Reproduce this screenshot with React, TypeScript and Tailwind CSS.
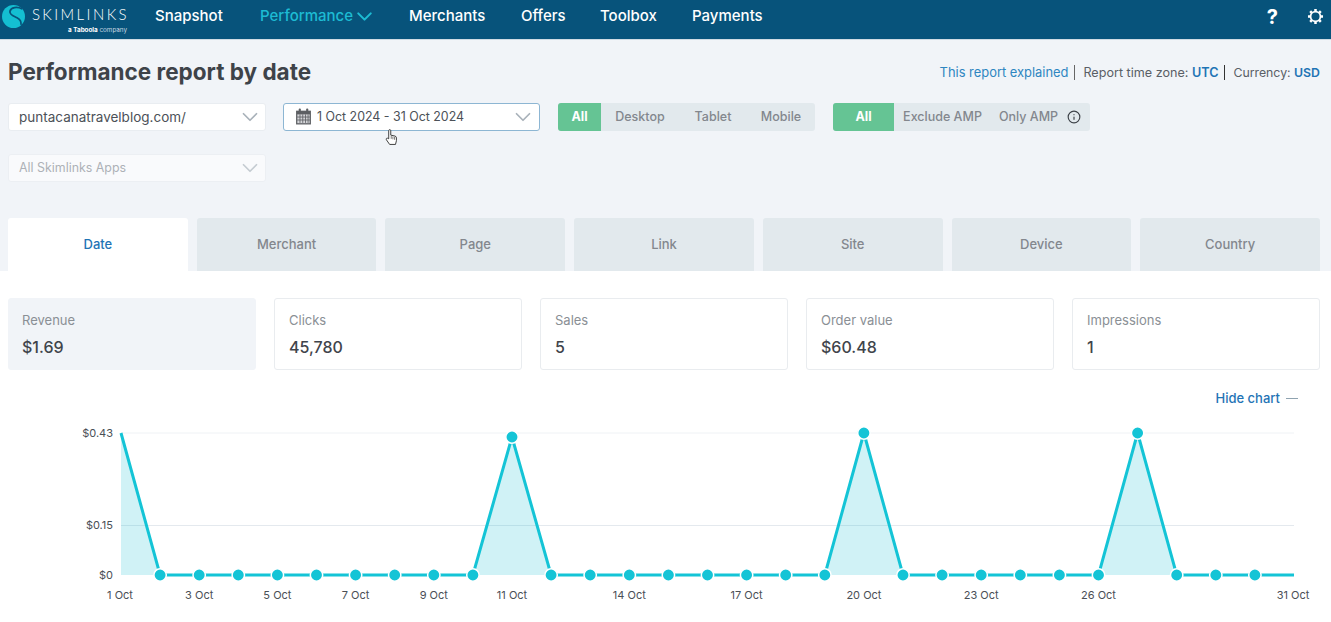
import React from "react";
import { ChevronDown, Info } from "lucide-react";

const F = "font-['Inter','Liberation_Sans',sans-serif]";
const xs = (d: number) => 121 + (d - 1) * 39.1;
const ys: Record<number, number> = { 1: 433, 11: 437, 20: 433, 27: 433 };
const y = (d: number) => ys[d] ?? 575;
const days = Array.from({ length: 31 }, (_, i) => i + 1);
const line = days.map((d) => `${xs(d)},${y(d)}`).join(" ");
const labels = [1, 3, 5, 7, 9, 11, 14, 17, 20, 23, 26, 31];

function Gear() {
  return (
    <svg viewBox="0 0 24 24" className="w-[19px] h-[19px]" fill="none" stroke="white" strokeWidth="2.200">
      <circle cx="12" cy="12" r="6.200" />
      <path strokeWidth="3.200" d="M12 2.500v3M12 18.500v3M2.500 12h3M18.500 12h3M5.300 5.300l2 2M16.700 16.700l2 2M5.300 18.700l2-2M16.700 7.300l2-2" />
    </svg>
  );
}

function Calendar() {
  return (
    <svg viewBox="0 0 16 16" className="w-[17px] h-[17px] shrink-0" fill="#5d5f63">
      <path d="M1 2.500h14V15.500H1z" />
      <rect x="3.500" y="0.500" width="2" height="3.500" rx="0.800" />
      <rect x="10.500" y="0.500" width="2" height="3.500" rx="0.800" />
      <path d="M2.200 6h11.600v8.300H2.200z" fill="#d5d6d9" />
      <path d="M2 8.500h12M2 11.300h12M4.700 6v8M7.300 6v8M9.900 6v8M12.300 6v8" stroke="#5d5f63" strokeWidth="0.800" />
    </svg>
  );
}

function Select({ text, muted, active, w, icon, size }: { text: string; muted?: boolean; active?: boolean; w: string; icon?: boolean; size: string }) {
  return (
    <div className={`${w} h-7 rounded-[3px] bg-white flex items-center justify-between border ${active ? "border-[#8db6d3] pl-[11px] pr-[3px]" : "border-[#e9edf1] pl-[10px] pr-[2px]"} ${muted ? "opacity-60" : ""}`}>
      <span className="flex items-center gap-[5px]">
        {icon && <Calendar />}
        <span className={`${size} ${muted ? "text-[#80858c]" : "text-[#4c5158]"}`}>{text}</span>
      </span>
      <ChevronDown size={26} strokeWidth={1.6} className="text-[#a9b2ba]" />
    </div>
  );
}

function Seg({ items, first, rest, children }: { items: string[]; first: string; rest: string[]; children?: React.ReactNode }) {
  return (
    <div className="h-[28px] rounded-[3px] bg-[#e2e9ed] flex items-center overflow-hidden text-[12.500px] font-medium text-[#83878d]">
      <div className={`${first} h-full bg-[#65c494] text-white font-bold flex items-center justify-center`}>{items[0]}</div>
      {items.slice(1).map((t, i) => (
        <div key={t} className={`${rest[i]} h-full flex items-center justify-center`}>{t}</div>
      ))}
      {children}
    </div>
  );
}

function Card({ label, value, active }: { label: string; value: string; active?: boolean }) {
  return (
    <div className={`h-[72px] rounded-[3px] flex flex-col justify-center gap-[9px] border ${active ? "bg-[#f1f4f8] border-[#f1f4f8] pl-[13px]" : "bg-white border-[#e9ecef] pl-[14px]"}`}>
      <div className="text-[13px] text-[#8a8f95] leading-4">{label}</div>
      <div className="text-[16px] font-medium text-[#3f444b] leading-5">{value}</div>
    </div>
  );
}

export default function App() {
  return (
    <div className={`${F} w-[1331px] h-[622px] overflow-hidden bg-white relative`}>
      <header className="h-10 bg-[#07537b] border-b border-[#cfdbe3] flex items-center pl-[2px] pr-[6px] pb-[6px] text-white">
        <div className="w-[125px] flex items-start gap-[5px] shrink-0 mt-[6px]">
          <svg viewBox="0 0 26 26" className="w-[23px] h-[23px] shrink-0 mt-[-1px]">
            <circle cx="13" cy="13" r="13" fill="#14bfd2" />
            <path d="M23 4.500C17 1.500 10 2.500 9 7c-.8 4 4 5.500 8 7.500 3.500 1.800 5 4 4.500 8" fill="none" stroke="#07537b" strokeWidth="2" />
          </svg>
          <div className="flex flex-col items-end leading-none w-[98px]">
            <span className="text-[15px] tracking-[0.16em] font-['Lato',sans-serif] font-light mr-[-2px] mt-[1px]">SKIMLINKS</span>
            <span className="text-[6.300px] text-[#c7d8e2] mt-[5px]"><b className="text-white">a Taboola</b> company</span>
          </div>
        </div>
        <nav className="flex items-center ml-[28px] text-[15px] font-medium">
          <span className="w-[105px]">Snapshot</span>
          <span className="w-[149px] text-[#1dbbd3] flex items-center">Performance <ChevronDown size={25} strokeWidth={2} className="ml-[-1px]" /></span>
          <span className="w-[112px]">Merchants</span>
          <span className="w-[79px]">Offers</span>
          <span className="w-[92px]">Toolbox</span>
          <span>Payments</span>
        </nav>
        <div className="ml-auto flex items-center gap-[28px]">
          <span className="text-[20px] font-bold leading-none">?</span>
          <Gear />
        </div>
      </header>

      <main className="bg-[#f1f4f8] pl-2 pr-[11px] h-[231px]">
        <div className="flex items-center justify-between h-[63px]">
          <h1 className="text-[22.500px] font-bold text-[#3e4349]">Performance report by date</h1>
          <div className="flex items-center text-[#5a5f66] mt-[2px]">
            <span className="text-[12.900px] text-[#2e86c1] pr-[6px] border-r border-[#666] leading-[15px]">This report explained</span>
            <span className="text-[12.600px] pl-[8px] pr-[6px] border-r border-[#333] leading-[15px]">Report time zone: <b className="text-[#1f74b5] font-semibold">UTC</b></span>
            <span className="text-[12.300px] pl-[8px] leading-[15px]">Currency: <b className="text-[#1f74b5] font-semibold">USD</b></span>
          </div>
        </div>
        <div className="flex items-start">
          <Select text="puntacanatravelblog.com/" w="w-[258px]" size="text-[13.500px]" />
          <div className="relative ml-[17px]">
            <Select text="1 Oct 2024 - 31 Oct 2024" w="w-[257px]" active icon size="text-[12.400px]" />
            <svg viewBox="0 0 14 18" className="absolute left-[102px] top-[25px] w-[13px] h-[18px]" fill="white" stroke="#333" strokeWidth="1">
              <path d="M4 8V2.200a1.100 1.100 0 0 1 2.200 0V7l4.600 1c1 .3 1.500 1 1.500 2v3l-1 4H5l-3.500-5c-.8-1.500 1-2.500 2.500-1z" />
              <path d="M6.700 8v3M8.500 8.500v3M10.300 9v3" fill="none" strokeWidth="0.700" />
            </svg>
          </div>
          <div className="ml-[18px]">
            <Seg items={["All", "Desktop", "Tablet", "Mobile"]} first="w-[43px]" rest={["w-[78px]", "w-[68px]", "w-[68px]"]} />
          </div>
          <div className="ml-[18px]">
            <Seg items={["All", "Exclude AMP", "Only AMP"]} first="w-[61px]" rest={["w-[97px]", "w-[75px]"]}>
              <div className="w-[24px] h-full flex items-center pl-[1px]">
                <Info size={14} strokeWidth={2} className="text-[#3e4349]" />
              </div>
            </Seg>
          </div>
        </div>
        <div className="mt-[23px]">
          <Select text="All Skimlinks Apps" w="w-[258px]" muted size="text-[12.400px]" />
        </div>
        <div className="grid grid-cols-7 gap-[9px] mt-[36px]">
          {["Date", "Merchant", "Page", "Link", "Site", "Device", "Country"].map((t, i) => (
            <div key={t} className={`h-[53px] rounded-t-[3px] flex items-center justify-center text-[13px] font-medium ${i === 0 ? "bg-white text-[#1f74b5]" : "bg-[#e2e9ed] text-[#83878d]"}`}>{t}</div>
          ))}
        </div>
      </main>

      <section className="pl-2 pr-[11px]">
        <div className="grid grid-cols-5 gap-[18px] mt-[27px]">
          <Card label="Revenue" value="$1.69" active />
          <Card label="Clicks" value="45,780" />
          <Card label="Sales" value="5" />
          <Card label="Order value" value="$60.48" />
          <Card label="Impressions" value="1" />
        </div>
        <div className="flex justify-end items-center gap-[6px] mt-[20px] pr-[22px] text-[13px] font-medium text-[#1f74b5] leading-4">
          Hide chart <span className="w-3 h-[1px] bg-[#8fa3b0]" />
        </div>
      </section>

      <svg className="absolute left-0 top-0 pointer-events-none" width="1331" height="622" viewBox="0 0 1331 622">
        <line x1="121" x2="1294" y1="433" y2="433" stroke="#eff2f5" />
        <line x1="121" x2="1294" y1="525.500" y2="525.500" stroke="#e4e9ee" />
        <polygon points={`121,575 ${line} 1294,575`} fill="#14bfd2" fillOpacity="0.2" />
        <polyline points={line} fill="none" stroke="#14c4d6" strokeWidth="3" />
        {days.slice(1, 30).map((d) => (
          <circle key={d} cx={xs(d)} cy={y(d)} r="6.200" fill="#14c4d6" stroke="white" strokeWidth="1.500" />
        ))}
        <g fontSize="11" fill="#4a4f56" textAnchor="end">
          <text x="113" y="437">$0.43</text>
          <text x="113" y="529">$0.15</text>
          <text x="113" y="579">$0</text>
        </g>
        <g fontSize="11" fill="#4a4f56" textAnchor="middle">
          {labels.map((d) => (
            <text key={d} x={d === 1 ? 120 : d === 31 ? 1293 : xs(d)} y="599">{d} Oct</text>
          ))}
        </g>
      </svg>
    </div>
  );
}
